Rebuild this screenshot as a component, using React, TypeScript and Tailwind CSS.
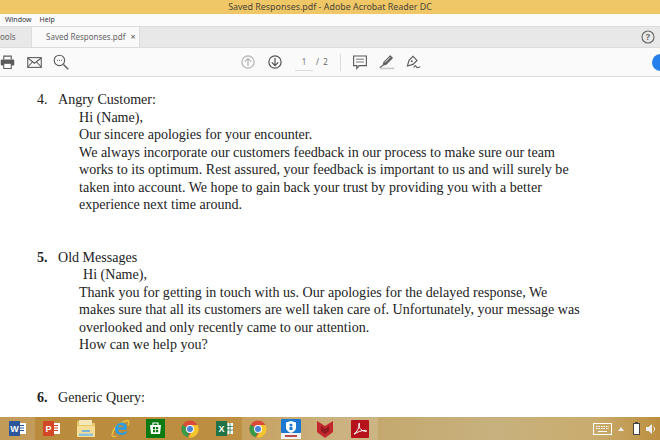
const UI = 'font-["Noto_Sans",sans-serif]';

const stroke = { fill: 'none', stroke: '#5a5a5a', strokeWidth: 1.4 };

function ToolIcon({ children, size = 20, className = '' }: { children: React.ReactNode; size?: number; className?: string }) {
  return (
    <svg width={size} height={size} viewBox="0 0 20 20" className={`shrink-0 ${className}`}>
      {children}
    </svg>
  );
}

function Circle({ color, dir }: { color: string; dir: 'up' | 'down' }) {
  return (
    <svg width="14" height="14" viewBox="0 0 16 16" className="shrink-0">
      <circle cx="8" cy="8" r="7" fill="none" stroke={color} strokeWidth="1.4" />
      <path d={dir === 'up' ? 'M8 12.500V4M4.300 7.500L8 3.800l3.700 3.700' : 'M8 3.500V12M4.300 8.500L8 12.200l3.700-3.700'} fill="none" stroke={color} strokeWidth="1.4" />
    </svg>
  );
}

function Tile({ children, active = false, w = 'w-[34.5px]' }: { children: React.ReactNode; active?: boolean; w?: string }) {
  return (
    <div className={`flex h-full shrink-0 items-center justify-center ${w} ${active ? 'bg-white/15' : ''}`}>
      {children}
    </div>
  );
}

function Chrome() {
  return (
    <svg width="18" height="18" viewBox="0 0 18 18">
      <circle cx="9" cy="9" r="8.500" fill="#dc4b3a" />
      <path d="M9 9L1.600 4.800A8.500 8.500 0 0 0 7 17.300z" fill="#3c9a46" />
      <path d="M9 5h7.600A8.500 8.500 0 0 1 7 17.300L11.500 11z" fill="#f5c52f" />
      <circle cx="9" cy="9" r="4" fill="#fff" />
      <circle cx="9" cy="9" r="3" fill="#4a82d8" />
    </svg>
  );
}

function Line({ children, indent = 'pl-[79px]' }: { children: React.ReactNode; indent?: string }) {
  return <p className={`h-[17.5px] whitespace-nowrap ${indent}`}>{children}</p>;
}

function Heading({ n, title, bold = false }: { n: string; title: string; bold?: boolean }) {
  return (
    <p className="flex h-[17.5px] whitespace-nowrap pl-[37px]">
      <span className={`w-[21px] ${bold ? 'font-bold' : ''}`}>{n}</span>
      <span>{title}</span>
    </p>
  );
}

export default function App() {
  return (
    <div className={`flex h-[440px] w-[660px] flex-col overflow-hidden bg-white ${UI}`}>
      {/* title bar */}
      <div className="flex h-[14px] shrink-0 items-center justify-center bg-[#f0c767] text-[8.9px] text-[#4a4436]">
        Saved Responses.pdf - Adobe Acrobat Reader DC
      </div>

      {/* menu */}
      <div className="flex h-[12px] shrink-0 items-center gap-[8px] bg-[#fbfbfb] pl-[5px] text-[7px] text-[#333]">
        <span>Window</span>
        <span>Help</span>
      </div>

      {/* tabs */}
      <div className="flex h-[22px] shrink-0 border-y border-[#dcdcdc] bg-[#e8e8e8] text-[8px] text-[#666]">
        <div className="flex w-[31px] items-center overflow-hidden">
          <span>ools</span>
        </div>
        <div className="flex w-[109px] items-center gap-[5px] whitespace-nowrap border-x border-[#dcdcdc] bg-[#f9f9f9] pl-[14px]">
          <span>Saved Responses.pdf</span>
          <span className="text-[9px] text-[#555]">×</span>
        </div>
        <div className="flex-1" />
        <div className="flex items-center pr-[5px]">
          <svg width="14" height="14" viewBox="0 0 14 14">
            <circle cx="7" cy="7" r="6" fill="none" stroke="#666" strokeWidth="1.100" />
            <text x="7" y="10.200" textAnchor="middle" fontSize="9" fontWeight="700" fill="#666" fontFamily="Noto Sans, sans-serif">?</text>
          </svg>
        </div>
      </div>

      {/* toolbar */}
      <div className="flex h-[29px] shrink-0 items-center border-b border-[#dcdcdc] bg-[#fafafa]">
        <ToolIcon size={15} className="ml-0">
          <path d="M5 6V1.500h10V6" {...stroke} />
          <rect x="1" y="6" width="18" height="8" rx="1.500" fill="#5a5a5a" />
          <rect x="5" y="11" width="10" height="7" fill="#fff" stroke="#5a5a5a" strokeWidth="1.400" />
        </ToolIcon>
        <ToolIcon size={15} className="ml-[12px]">
          <rect x="1" y="3.500" width="18" height="13" {...stroke} />
          <path d="M1 4l9 7 9-7M1 16l6.500-7M19 16l-6.500-7" {...stroke} />
        </ToolIcon>
        <ToolIcon size={16} className="ml-[11px]">
          <circle cx="8" cy="8" r="6.500" {...stroke} />
          <path d="M13 13l6 6" {...stroke} strokeWidth={1.800} />
          <path d="M5 8h1M7.600 8h1M10.200 8h1" {...stroke} />
        </ToolIcon>
        <div className="ml-[172px]">
          <Circle color="#b5b5b5" dir="up" />
        </div>
        <div className="ml-[13px]">
          <Circle color="#555" dir="down" />
        </div>
        <div className="ml-[13px] flex h-[17px] w-[18px] items-center justify-center border-b border-[#dcdcdc] text-[8px] text-[#777]">
          1
        </div>
        <span className="ml-[3px] whitespace-pre text-[8px] text-[#666]">/  2</span>
        <div className="ml-[12px] h-[17px] w-px bg-[#dcdcdc]" />
        <ToolIcon size={16} className="ml-[11px]">
          <path d="M2 2.500h16v12H9l-3 3.500v-3.500H2z" {...stroke} />
          <path d="M5 6.500h10M5 10h10" {...stroke} strokeWidth={1} />
        </ToolIcon>
        <ToolIcon size={16} className="ml-[11px]">
          <path d="M5 14l1-4L14 2l3 3-8 8z" fill="#5a5a5a" stroke="#5a5a5a" strokeWidth="1" />
          <path d="M7.500 10.500L14 4" stroke="#fafafa" strokeWidth="1.200" />
          <rect x="1" y="17" width="18" height="2" fill="#c8c8c8" />
          <path d="M1 17l4-3" {...stroke} />
        </ToolIcon>
        <ToolIcon size={16} className="ml-[10px]">
          <path d="M3 15l2-7 5-5 5 5-5 5z" {...stroke} />
          <circle cx="8.500" cy="9" r="1.200" fill="#5a5a5a" />
          <path d="M11 17c1-3 2-3 3-1s2 1 5 0" {...stroke} />
        </ToolIcon>
        <div className="flex-1" />
        <div className="-mr-[9px] h-[17px] w-[17px] rounded-full bg-[#2680eb]" />
      </div>

      {/* page */}
      <div className="flex-1 overflow-hidden bg-white pt-[14px] font-['Liberation_Serif',serif] text-[14.05px] leading-[17.5px] text-[#222]">
        <Heading n="4." title="Angry Customer:" />
        <Line>Hi (Name),</Line>
        <Line>Our sincere apologies for your encounter.</Line>
        <Line>We always incorporate our customers feedback in our process to make sure our team</Line>
        <Line>works to its optimum. Rest assured, your feedback is important to us and will surely be</Line>
        <Line>taken into account. We hope to gain back your trust by providing you with a better</Line>
        <Line>experience next time around.</Line>
        <div className="h-[35px]" />
        <Heading n="5." title="Old Messages" bold />
        <Line indent="pl-[83px]">Hi (Name),</Line>
        <Line>Thank you for getting in touch with us. Our apologies for the delayed response, We</Line>
        <Line>makes sure that all its customers are well taken care of. Unfortunately, your message was</Line>
        <Line>overlooked and only recently came to our attention.</Line>
        <Line>How can we help you?</Line>
        <div className="h-[35px]" />
        <Heading n="6." title="Generic Query:" bold />
      </div>

      {/* taskbar */}
      <div className="flex h-[23px] shrink-0 items-center bg-[linear-gradient(90deg,#b98a3b_0%,#bd8f42_36%,#c2a468_50%,#c8b17e_75%,#c9ac6e_90%,#bb8e3e_100%)]">
        <Tile active>
          <svg width="17" height="15" viewBox="0 0 17 15">
            <rect x="7" y="2" width="10" height="11" fill="#fff" />
            <path d="M9 4.500h6M9 7h6M9 9.500h6" stroke="#2b579a" />
            <rect x="0" y="0" width="11" height="15" fill="#2b579a" />
            <text x="5.500" y="11" textAnchor="middle" fontSize="9" fontWeight="700" fill="#fff" fontFamily="Liberation Sans, sans-serif">W</text>
          </svg>
        </Tile>
        <Tile>
          <svg width="17" height="15" viewBox="0 0 17 15">
            <rect x="7" y="2" width="10" height="11" fill="#fff" />
            <path d="M11 4.500h4M11 7h4M11 9.500h4" stroke="#d24726" />
            <rect x="0" y="0" width="11" height="15" fill="#d24726" />
            <text x="5.500" y="11" textAnchor="middle" fontSize="9" fontWeight="700" fill="#fff" fontFamily="Liberation Sans, sans-serif">P</text>
          </svg>
        </Tile>
        <Tile>
          <svg width="20" height="19" viewBox="0 0 20 19">
            <path d="M1 2h7l2 2h9v13H1z" fill="#e8c76a" />
            <rect x="3" y="1" width="13" height="5" fill="#f4e8b8" />
            <path d="M1 7h18v11H1z" fill="#f6de94" />
            <rect x="6" y="11" width="8" height="2" fill="#7ab6d8" />
            <rect x="3" y="14.500" width="14" height="2.500" fill="#8fc3dd" />
          </svg>
        </Tile>
        <Tile>
          <svg width="19" height="19" viewBox="0 0 19 19">
            <path d="M1.500 14C3 8 10 2.500 16.500 1.500c1.500 0 2 2 .5 5" fill="none" stroke="#f3c33c" strokeWidth="1.300" />
            <path d="M2 13.500c-2 3-1 5 3.500 3.500" fill="none" stroke="#f3c33c" strokeWidth="1.300" />
            <path d="M15.500 10.800H7c.2 3.500 5 4 7 1.700h2.500c-2.300 4.800-11 5-12.300-1C3.200 7 7.500 3.200 11 3.500c3.500.3 5.800 3.300 4.500 7.300zM7 8.300h5.500c0-3-5-3-5.500 0z" fill="#2a9ee0" />
          </svg>
        </Tile>
        <Tile>
          <svg width="19" height="19" viewBox="0 0 19 19">
            <rect width="19" height="19" fill="#0b7a12" />
            <path d="M4 6h11l-1 9H5z" fill="#fff" />
            <path d="M7 6V4h5v2" fill="none" stroke="#fff" strokeWidth="1.200" />
            <path d="M7 8h2.200v2.200H7zM10 8h2.200v2.200H10zM7 11h2.200v2.200H7zM10 11h2.200v2.200H10z" fill="#0b7a12" />
          </svg>
        </Tile>
        <Tile>
          <Chrome />
        </Tile>
        <Tile>
          <svg width="17" height="15" viewBox="0 0 17 15">
            <rect x="7" y="2" width="10" height="11" fill="#fff" />
            <path d="M11 2v11M14 2v11M7 5.500h10M7 9h10" stroke="#217346" strokeWidth=".800" />
            <rect x="0" y="0" width="11" height="15" fill="#217346" />
            <text x="5.500" y="11" textAnchor="middle" fontSize="9" fontWeight="700" fill="#fff" fontFamily="Liberation Sans, sans-serif">X</text>
          </svg>
        </Tile>
        <Tile active w="w-[33px]">
          <Chrome />
        </Tile>
        <Tile active w="w-[33px]">
          <svg width="20" height="20" viewBox="0 0 20 20">
            <rect width="20" height="14" rx="1" fill="#1a78d2" />
            <rect y="14" width="20" height="6" fill="#f2f2f2" />
            <path d="M10 2l5 1.500v5c0 3-2.500 4.500-5 5.500-2.500-1-5-2.500-5-5.500v-5z" fill="#fff" />
            <circle cx="10" cy="6" r="1.500" fill="#1a78d2" />
            <rect x="8.500" y="8" width="3" height="3" fill="#1a78d2" />
            <rect x="4" y="16" width="12" height="2" fill="#b54a4a" />
          </svg>
        </Tile>
        <Tile active w="w-[35px]">
          <svg width="18" height="18" viewBox="0 0 18 18">
            <path d="M1 1l8 5 8-5v11l-8 6-8-6z" fill="#c1272d" />
            <path d="M5 6l4 3 4-3v5l-4 3-4-3z" fill="#8f1a1f" />
          </svg>
        </Tile>
        <Tile active w="w-[35px]">
          <svg width="18" height="18" viewBox="0 0 18 18">
            <rect width="18" height="18" rx="1" fill="#b5121b" />
            <path d="M3 14c3-2 5-6 5.500-10 .3-1.500-1-1-.8.500C8.200 9 11 11 15 11.500c1 0 .8-1.200-.5-1.200-3.500 0-8 1.500-11 3.700z" fill="none" stroke="#fff" strokeWidth="1" />
          </svg>
        </Tile>
        <div className="flex-1" />
        <div className="flex items-center pr-[4px]">
          <svg width="19" height="12" viewBox="0 0 19 12">
            <rect x=".5" y=".5" width="18" height="11" fill="none" stroke="#fff" />
            <path d="M3 3.500h13M3 5.500h13" stroke="#fff" strokeDasharray="1.500 1" />
            <path d="M5 8.500h9" stroke="#fff" />
          </svg>
          <svg width="6" height="4" viewBox="0 0 6 4" className="ml-[6px]">
            <path d="M0 4l3-4 3 4z" fill="#eee" />
          </svg>
          <svg width="7" height="13" viewBox="0 0 7 13" className="ml-[9px]">
            <rect x="0.500" y="1.500" width="6" height="11" fill="#fff" stroke="#444" />
            <rect x="2" y="0" width="3" height="1.500" fill="#444" />
          </svg>
          <svg width="10" height="12" viewBox="0 0 10 12" className="ml-[6px]">
            <path d="M0 4h2.500L6 1v10L2.500 8H0z" fill="#eee" />
            <path d="M7.500 3.500c1.500 1.500 1.500 3.500 0 5" fill="none" stroke="#eee" />
          </svg>
        </div>
      </div>
    </div>
  );
}
